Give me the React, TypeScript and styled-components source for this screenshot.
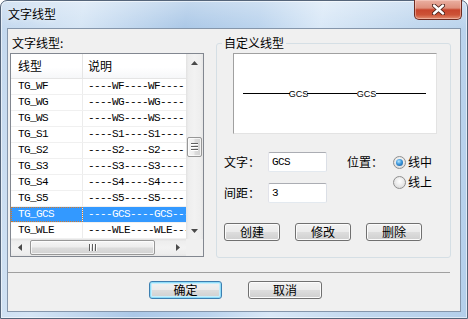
import React from 'react';
import styled, { createGlobalStyle } from 'styled-components';

const CJK = `"Noto Sans CJK SC", "Liberation Sans", sans-serif`;
const MONO = `"Liberation Mono", "Noto Sans CJK SC", monospace`;

const GlobalStyle = createGlobalStyle`
  html, body { margin: 0; padding: 0; background: #ffffff; }
  body { font-family: ${CJK}; font-size: 12px; color: #000; }
  *, *::before, *::after { box-sizing: border-box; }
`;

//Window frame
const Window = styled.div`
  width: 468px;
  height: 319px;
  display: flex;
  flex-direction: column;
  border: 1px solid #55657a;
  border-radius: 7px 7px 0 0;
  background:
    linear-gradient(180deg, rgba(255, 255, 255, 0.3) 0%, rgba(255, 255, 255, 0) 28px),
    linear-gradient(100deg, #c3d8ee 0%, #d5e5f5 16%, #abc8e7 36%, #bad3ed 50%, #d9e8f7 62%, #c0d7ee 80%, #b4cfeb 100%);
  box-shadow: inset 0 0 0 1px rgba(255, 255, 255, 0.55);
`;

const TitleBar = styled.div`
  height: 27px;
  flex-shrink: 0;
  display: flex;
  align-items: flex-start;
  justify-content: space-between;
`;

const Title = styled.span`
  padding: 6px 0 0 7px;
  line-height: 14px;
  text-shadow: 0 0 6px rgba(255, 255, 255, 0.95);
`;

const CloseButton = styled.div`
  width: 48px;
  height: 20px;
  margin: -1px 5px 0 0;
  display: flex;
  align-items: center;
  justify-content: center;
  border: 1px solid #6e2b20;
  border-top: none;
  border-radius: 0 0 5px 5px;
  background: linear-gradient(180deg, #eab0a2 0%, #de8f7c 42%, #c8462d 52%, #cd5337 78%, #e38f72 100%);
  box-shadow: inset 0 0 0 1px rgba(255, 220, 210, 0.45);
`;

const Client = styled.div`
  flex: 1;
  margin: 0 6px 6px 6px;
  border: 1px solid #8596ab;
  background: #f0f0f0;
  display: flex;
  flex-direction: column;
`;

const MainRow = styled.div`
  display: flex;
  align-items: flex-start;
  gap: 12px;
  padding: 7px 9px 0 2px;
`;

//Left pane --list view
const LeftPane = styled.div`
  width: 194px;
  display: flex;
  flex-direction: column;
`;

const PaneLabel = styled.div`
  line-height: 14px;
  padding-left: 2px;
`;

const ListBox = styled.div`
  margin-top: 3px;
  height: 204px;
  border: 1px solid #828790;
  background: #fff;
  display: grid;
  grid-template-columns: 175px 17px;
  grid-template-rows: 185px 17px;
`;

const ListArea = styled.div`
  overflow: hidden;
  display: flex;
  flex-direction: column;
`;

const HeaderRow = styled.div`
  display: grid;
  grid-template-columns: 72px 1fr;
  height: 25px;
  flex-shrink: 0;
  border-bottom: 1px solid #e5e5e5;
  background: linear-gradient(180deg, #ffffff 0%, #ffffff 55%, #f6f7f9 100%);
`;

const HeaderCell = styled.div<{ $first?: boolean }>`
  line-height: 24px;
  padding-left: ${p => (p.$first ? 7 : 5)}px;
  border-right: ${p => (p.$first ? '1px solid #e5e5e5' : 'none')};
`;

const Row = styled.div<{ $selected?: boolean }>`
  display: grid;
  grid-template-columns: 72px 1fr;
  height: 16px;
  flex-shrink: 0;
  border-bottom: 1px solid #f0f0f0;
  background: ${p => (p.$selected ? '#3399ff' : 'transparent')};
  color: ${p => (p.$selected ? '#ffffff' : '#000000')};
`;

const Cell = styled.div<{ $first?: boolean; $focus?: boolean }>`
  font-family: ${MONO};
  font-size: 11px;
  letter-spacing: -0.6px;
  line-height: 15px;
  white-space: nowrap;
  overflow: hidden;
  padding-left: ${p => (p.$first ? 7 : 5)}px;
  border-right: ${p => (p.$first ? '1px solid #ececec' : 'none')};
  outline: ${p => (p.$focus ? '1px dotted #d07a2c' : 'none')};
  outline-offset: -1px;
`;

const VScroll = styled.div`
  display: flex;
  flex-direction: column;
  background: linear-gradient(90deg, #e2e2e2 0%, #eeeeee 15%, #f2f2f2 50%, #eeeeee 85%, #e6e6e6 100%);
`;

const HScroll = styled.div`
  display: flex;
  align-items: center;
  background: linear-gradient(180deg, #e2e2e2 0%, #eeeeee 15%, #f2f2f2 50%, #eeeeee 85%, #e6e6e6 100%);
`;

const ArrowBox = styled.div<{ $end?: boolean }>`
  width: 17px;
  height: 17px;
  flex-shrink: 0;
  display: flex;
  align-items: center;
  justify-content: center;
  margin-left: ${p => (p.$end ? 'auto' : '0')};
`;

const Track = styled.div`
  flex: 1;
  display: flex;
  flex-direction: column;
  align-items: center;
`;

const Thumb = styled.div<{ $horizontal?: boolean }>`
  display: flex;
  align-items: center;
  justify-content: center;
  flex-direction: ${p => (p.$horizontal ? 'row' : 'column')};
  gap: 1px;
  width: ${p => (p.$horizontal ? '125px' : '15px')};
  height: ${p => (p.$horizontal ? '15px' : '20px')};
  margin: ${p => (p.$horizontal ? '0 0 0 2px' : '66px 0 0 0')};
  border: 1px solid #979797;
  border-radius: 2px;
  background: ${p =>
    p.$horizontal
      ? 'linear-gradient(180deg, #f6f6f6 0%, #ececec 48%, #dcdcdc 52%, #d2d2d2 100%)'
      : 'linear-gradient(90deg, #f6f6f6 0%, #ececec 48%, #dcdcdc 52%, #d2d2d2 100%)'};
  box-shadow: inset 0 0 0 1px rgba(255, 255, 255, 0.7);
`;

const Grip = styled.span<{ $horizontal?: boolean }>`
  display: block;
  width: ${p => (p.$horizontal ? '1px' : '7px')};
  height: ${p => (p.$horizontal ? '7px' : '1px')};
  background: #5e5e5e;
  box-shadow: ${p => (p.$horizontal ? '1px 0 0 #ffffff' : '0 1px 0 #ffffff')};
  margin: ${p => (p.$horizontal ? '0 1px 0 0' : '0 0 1px 0')};
`;

const Corner = styled.div`
  background: #f0f0f0;
`;

//Right pane --group box
const GroupBox = styled.fieldset`
  width: 235px;
  height: 222px;
  margin: 0;
  padding: 0;
  min-width: 0;
  border: 1px solid #d5dfe5;
  border-radius: 3px;
`;

const Legend = styled.legend`
  margin-left: 5px;
  padding: 0 2px;
  line-height: 14px;
  font-size: 12px;
`;

const GroupInner = styled.div`
  display: flex;
  flex-direction: column;
`;

const Preview = styled.div`
  width: 204px;
  height: 81px;
  margin: 3px 0 0 16px;
  background: #ffffff;
  border: 1px solid;
  border-color: #a0a0a0 #e3e3e3 #e3e3e3 #a0a0a0;
`;

const FormGrid = styled.div`
  display: grid;
  grid-template-columns: 44px 59px 20px 46px auto;
  grid-template-rows: 20px 20px;
  row-gap: 11px;
  margin-top: 18px;
  padding-left: 7px;
`;

const FieldLabel = styled.div<{ $col: number; $row: number }>`
  grid-column: ${p => p.$col};
  grid-row: ${p => p.$row};
  display: flex;
  align-items: center;
  line-height: 14px;
`;

const TextBox = styled.input<{ $row: number }>`
  grid-column: 2;
  grid-row: ${p => p.$row};
  width: 59px;
  height: 20px;
  margin: 0;
  padding: 0 3px;
  border: 1px solid;
  border-color: #abadb3 #dbdfe6 #e3e9ef #e2e3ea;
  border-radius: 2px;
  background: #fff;
  font-family: ${MONO};
  font-size: 11px;
  letter-spacing: -0.6px;
  color: #000;
  outline: none;
`;

const RadioGroup = styled.div`
  grid-column: 5;
  grid-row: 1 / span 2;
  display: flex;
  flex-direction: column;
`;

const RadioItem = styled.label`
  height: 20px;
  display: flex;
  align-items: center;
  gap: 2px;
  line-height: 14px;
`;

const RadioCircle = styled.span`
  width: 13px;
  height: 13px;
  border-radius: 50%;
  border: 1px solid #8f8f8f;
  background: radial-gradient(circle at 50% 40%, #ffffff 0%, #ececec 45%, #d2d2d2 100%);
  display: flex;
  align-items: center;
  justify-content: center;
`;

const RadioDot = styled.span`
  width: 7px;
  height: 7px;
  border-radius: 50%;
  background: radial-gradient(circle at 40% 35%, #b5e6ff 0%, #3d97db 45%, #0d4f91 100%);
`;

const ButtonRow = styled.div`
  display: flex;
  gap: 15px;
  margin-top: 20px;
  padding-left: 7px;
`;

const Button = styled.button<{ $width: number; $default?: boolean }>`
  width: ${p => p.$width}px;
  height: 18px;
  margin: 0;
  padding: 0;
  font-family: ${CJK};
  font-size: 12px;
  line-height: 14px;
  color: #000;
  border: 1px solid ${p => (p.$default ? '#3c7fb1' : '#707070')};
  border-radius: 3px;
  background: linear-gradient(180deg, #f2f2f2 0%, #ebebeb 48%, #dddddd 52%, #cfcfcf 100%);
  box-shadow: ${p => (p.$default ? 'inset 0 0 0 1px #8fdcf8, inset 0 0 0 2px #c6eefc' : 'inset 0 0 0 1px #fbfbfb')};
`;

const Separator = styled.div`
  height: 1px;
  margin: 14px 10px 0 0;
  background: #a0a0a0;
`;

const Footer = styled.div`
  display: flex;
  justify-content: center;
  gap: 26px;
  margin-top: 8px;
  padding-left: 3px;
`;

const Arrow = ({ dir }: { dir: 'up' | 'down' | 'left' | 'right' }) => {
  const pts = {
    up: '0,4 3.5,0 7,4',
    down: '0,0 7,0 3.5,4',
    left: '4,0 4,7 0,3.5',
    right: '0,0 4,3.5 0,7',
  }[dir];
  const vertical = dir === 'up' || dir === 'down';
  return (
    <svg width={vertical ? 7 : 4} height={vertical ? 4 : 7} viewBox={vertical ? '0 0 7 4' : '0 0 4 7'}>
      <polygon points={pts} fill="#4a4a4a" />
    </svg>
  );
};

const rows = [
  ['TG_WF', '----WF----WF----'],
  ['TG_WG', '----WG----WG----'],
  ['TG_WS', '----WS----WS----'],
  ['TG_S1', '----S1----S1----'],
  ['TG_S2', '----S2----S2----'],
  ['TG_S3', '----S3----S3----'],
  ['TG_S4', '----S4----S4----'],
  ['TG_S5', '----S5----S5----'],
  ['TG_GCS', '----GCS----GCS----'],
  ['TG_WLE', '----WLE----WLE----'],
];

export default function App() {
  const selected = 'TG_GCS';

  return (
    <>
      <GlobalStyle />
      <Window>
        <TitleBar>
          <Title>文字线型</Title>
          <CloseButton>
            <svg width="13" height="11" viewBox="0 0 13 11">
              <path d="M2 1.5 L11 9.5 M11 1.5 L2 9.5" stroke="#4a2018" strokeWidth="4.2" strokeLinecap="round" />
              <path d="M2 1.5 L11 9.5 M11 1.5 L2 9.5" stroke="#ffffff" strokeWidth="2.4" strokeLinecap="round" />
            </svg>
          </CloseButton>
        </TitleBar>

        <Client>
          <MainRow>
            <LeftPane>
              <PaneLabel>文字线型:</PaneLabel>
              <ListBox>
                <ListArea>
                  <HeaderRow>
                    <HeaderCell $first>线型</HeaderCell>
                    <HeaderCell>说明</HeaderCell>
                  </HeaderRow>
                  {rows.map(([name, desc]) => (
                    <Row key={name} $selected={name === selected}>
                      <Cell $first $focus={name === selected}>{name}</Cell>
                      <Cell>{desc}</Cell>
                    </Row>
                  ))}
                </ListArea>
                <VScroll>
                  <ArrowBox><Arrow dir="up" /></ArrowBox>
                  <Track>
                    <Thumb>
                      <Grip /><Grip /><Grip />
                    </Thumb>
                  </Track>
                  <ArrowBox><Arrow dir="down" /></ArrowBox>
                </VScroll>
                <HScroll>
                  <ArrowBox><Arrow dir="left" /></ArrowBox>
                  <Thumb $horizontal>
                    <Grip $horizontal /><Grip $horizontal /><Grip $horizontal />
                  </Thumb>
                  <ArrowBox $end><Arrow dir="right" /></ArrowBox>
                </HScroll>
                <Corner />
              </ListBox>
            </LeftPane>

            <GroupBox>
              <Legend>自定义线型</Legend>
              <GroupInner>
                <Preview>
                  <svg width="202" height="79" viewBox="0 0 202 79">
                    <g stroke="#000" strokeWidth="1" shapeRendering="crispEdges">
                      <line x1="9" y1="39.5" x2="56" y2="39.5" />
                      <line x1="73" y1="39.5" x2="123" y2="39.5" />
                      <line x1="142" y1="39.5" x2="192" y2="39.5" />
                    </g>
                    <g fontFamily="Liberation Sans, sans-serif" fontSize="9" fill="#000" textAnchor="middle">
                      <text x="64.5" y="43">GCS</text>
                      <text x="132.5" y="43">GCS</text>
                    </g>
                  </svg>
                </Preview>

                <FormGrid>
                  <FieldLabel $col={1} $row={1}>文字：</FieldLabel>
                  <TextBox $row={1} readOnly value="GCS" />
                  <FieldLabel $col={1} $row={2}>间距：</FieldLabel>
                  <TextBox $row={2} readOnly value="3" />
                  <FieldLabel $col={4} $row={1}>位置：</FieldLabel>
                  <RadioGroup>
                    <RadioItem>
                      <RadioCircle><RadioDot /></RadioCircle>
                      线中
                    </RadioItem>
                    <RadioItem>
                      <RadioCircle />
                      线上
                    </RadioItem>
                  </RadioGroup>
                </FormGrid>

                <ButtonRow>
                  <Button $width={56}>创建</Button>
                  <Button $width={56}>修改</Button>
                  <Button $width={56}>删除</Button>
                </ButtonRow>
              </GroupInner>
            </GroupBox>
          </MainRow>

          <Separator />

          <Footer>
            <Button $width={73} $default>确定</Button>
            <Button $width={74}>取消</Button>
          </Footer>
        </Client>
      </Window>
    </>
  );
}
